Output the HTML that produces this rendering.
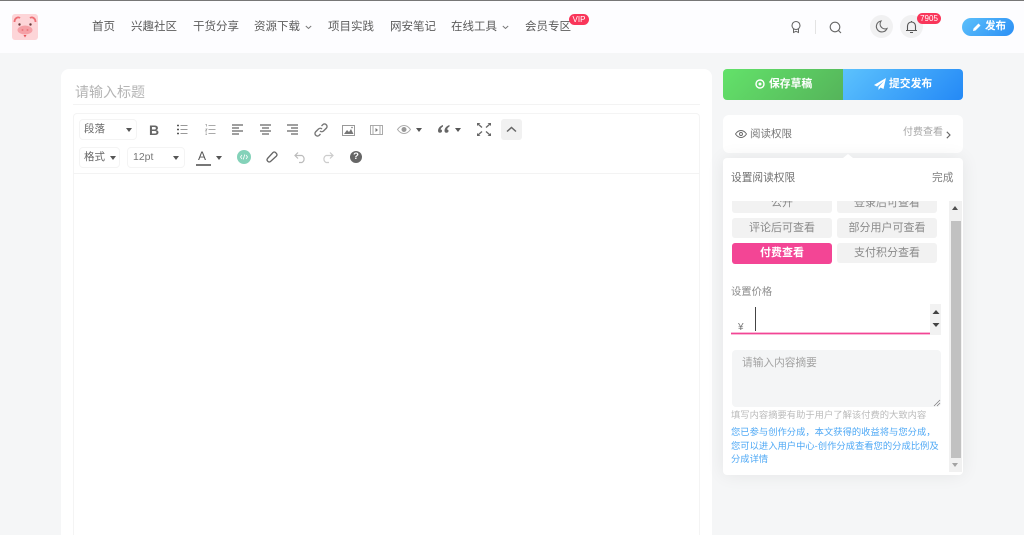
<!DOCTYPE html>
<html lang="zh-CN">
<head>
<meta charset="utf-8">
<title>发布</title>
<style>
*{box-sizing:border-box}
html,body{margin:0;padding:0;width:1024px;height:535px;overflow:hidden}
body{background:#f5f6f7;font-family:"Liberation Sans","Noto Sans CJK SC",sans-serif;color:#555}
#w{position:relative;width:1024px;height:535px;overflow:hidden;background:#f5f6f7}
.a{position:absolute;white-space:nowrap}
svg{position:absolute;overflow:visible;fill:none}
.nav{top:19px;font-size:11.5px;line-height:16px;color:#5c5c5c}
.sel{border:1px solid #f4f4f4;border-radius:4px;height:21px;background:#fff}
.opt{position:absolute;height:20px;width:100px;background:#f2f2f2;border-radius:3px;font-size:11px;line-height:20px;text-align:center;color:#8a8a8a}
.tri{position:absolute;width:0;height:0;border-left:3.5px solid transparent;border-right:3.5px solid transparent;border-top:4px solid #555}
.blue{left:731px;font-size:9.3px;line-height:13px;color:#4ea8f5}
</style>
</head>
<body>
<div id="w">
<!-- Header -->
<div class="a" style="left:0;top:0;width:1024px;height:53px;background:#fdfdff;border-top:1px solid #777"></div>
<svg style="left:11px;top:13px" width="28" height="28" viewBox="0 0 28 28">
<rect x="1" y="1" width="26" height="26" rx="3" fill="#fdd5d8"/>
<path d="M3.500 9C3.500 5 7 3.500 9 5M24.500 9C24.500 5 21 3.500 19 5" stroke="#ee6f75" stroke-width="1.800"/>
<circle cx="8.500" cy="11.500" r="1.200" fill="#6b3a3a"/><circle cx="19.500" cy="11.500" r="1.200" fill="#6b3a3a"/>
<ellipse cx="14" cy="17" rx="7.500" ry="4.500" fill="#f5a0a6"/>
<circle cx="11.500" cy="17" r="1" fill="#e9787e"/><circle cx="16.500" cy="17" r="1" fill="#e9787e"/>
<path d="M12.500 22h3l-1.500 2.500z" fill="#e8525a"/>
</svg>
<div class="a nav" style="left:92px">首页</div>
<div class="a nav" style="left:131px">兴趣社区</div>
<div class="a nav" style="left:193px">干货分享</div>
<div class="a nav" style="left:254px">资源下载</div>
<svg style="left:305px;top:25px" width="7" height="5"><path d="M.8 1l2.700 2.500L6.200 1" stroke="#777"/></svg>
<div class="a nav" style="left:328px">项目实践</div>
<div class="a nav" style="left:390px">网安笔记</div>
<div class="a nav" style="left:451px">在线工具</div>
<svg style="left:502px;top:25px" width="7" height="5"><path d="M.8 1l2.700 2.500L6.200 1" stroke="#777"/></svg>
<div class="a nav" style="left:525px">会员专区</div>
<div class="a" style="left:569px;top:14px;width:20px;height:11px;border-radius:6px;background:#f9365a;color:#fff;font-size:8px;line-height:11px;text-align:center">VIP</div>
<svg style="left:790px;top:20px" width="12" height="14" viewBox="0 0 12 14"><circle cx="6" cy="5.500" r="4" stroke="#666" stroke-width="1.100"/><path d="M3.500 9v3.500l2.500-1.200 2.500 1.200V9" stroke="#666"/></svg>
<div class="a" style="left:815px;top:20px;width:1px;height:14px;background:#e3e3e3"></div>
<svg style="left:829px;top:21px" width="13" height="13" viewBox="0 0 13 13"><circle cx="6" cy="6" r="4.800" stroke="#666" stroke-width="1.100"/><path d="M9.500 9.500L12 12" stroke="#666" stroke-width="1.100"/></svg>
<div class="a" style="left:870px;top:15px;width:23px;height:23px;border-radius:50%;background:#f1f1f2"></div>
<svg style="left:875px;top:20px" width="13" height="13" viewBox="0 0 13 13"><path d="M6 1a5.500 5.500 0 1 0 6 7.500A5 5 0 0 1 6 1z" stroke="#666" stroke-width="1.100"/></svg>
<div class="a" style="left:900px;top:15px;width:23px;height:23px;border-radius:50%;background:#f1f1f2"></div>
<svg style="left:905px;top:20px" width="13" height="14" viewBox="0 0 13 14"><path d="M1 10.500h11M2.500 10.500V6a4 4 0 0 1 8 0v4.500M5 12.500h3M6.500 1v1" stroke="#555" stroke-width="1.100"/></svg>
<div class="a" style="left:917px;top:13px;width:24px;height:11px;border-radius:6px;background:#f9365a;color:#fff;font-size:8px;line-height:11px;text-align:center">7905</div>
<div class="a" style="left:962px;top:18px;width:52px;height:18px;border-radius:9px;background:linear-gradient(135deg,#5cc0fb,#2b8ff5)"></div>
<svg style="left:972px;top:22px" width="10" height="10" viewBox="0 0 10 10"><path d="M1 9l.5-2.500L6.500 1.500l2 2-5 5z" fill="#fff"/></svg>
<div class="a" style="left:985px;top:18px;font-size:10.500px;line-height:16px;color:#fff;font-weight:bold">发布</div>

<!-- Main card -->
<div class="a" style="left:61px;top:69px;width:651px;height:466px;background:#fff;border-radius:8px 8px 0 0"></div>
<div class="a" style="left:75px;top:83px;font-size:14px;line-height:19px;color:#b4b4b4">请输入标题</div>
<div class="a" style="left:73px;top:104px;width:627px;height:1px;background:#f3f3f3"></div>
<div class="a" style="left:73px;top:113px;width:627px;height:422px;border:1px solid #f4f4f4;border-bottom:0;border-radius:4px 4px 0 0"></div>
<div class="a" style="left:73px;top:173px;width:627px;height:1px;background:#f3f3f3"></div>

<!-- Toolbar row 1 -->
<div class="a sel" style="left:79px;top:119px;width:58px"></div>
<div class="a" style="left:84px;top:122px;font-size:10.500px;line-height:14px;color:#666">段落</div>
<div class="tri" style="left:126px;top:128px"></div>
<div class="a" style="left:149px;top:122px;font-size:14px;line-height:16px;font-weight:bold;color:#666">B</div>
<svg style="left:177px;top:124px" width="11" height="11" viewBox="0 0 11 11"><path d="M3.500 1.500h7M3.500 5.500h7M3.500 9.500h7" stroke="#999"/><path d="M0 1.500h2M0 5.500h2M0 9.500h2" stroke="#555" stroke-width="1.500"/></svg>
<svg style="left:205px;top:124px" width="11" height="11" viewBox="0 0 11 11"><path d="M3.500 1.500h7M3.500 5.500h7M3.500 9.500h7" stroke="#aaa"/><path d="M.5 0.500h1v2M.5 5h1.500L.5 7h1.500M.5 9h1.500M.5 10.500h1.500" stroke="#999" stroke-width=".7"/></svg>
<svg style="left:232px;top:124px" width="11" height="11" viewBox="0 0 11 11"><path d="M0 1h11M0 4h7M0 7h11M0 10h7" stroke="#666" stroke-width="1.300"/></svg>
<svg style="left:260px;top:124px" width="11" height="11" viewBox="0 0 11 11"><path d="M0 1h11M2 4h7M0 7h11M2 10h7" stroke="#666" stroke-width="1.300"/></svg>
<svg style="left:287px;top:124px" width="11" height="11" viewBox="0 0 11 11"><path d="M0 1h11M4 4h7M0 7h11M4 10h7" stroke="#666" stroke-width="1.300"/></svg>
<svg style="left:314px;top:123px" width="14" height="14" viewBox="0 0 14 14"><path d="M6 8a2.500 2.500 0 0 0 3.500 0l3-3A2.500 2.500 0 0 0 9 1.500L7.500 3M8 6a2.500 2.500 0 0 0-3.500 0l-3 3A2.500 2.500 0 0 0 5 12.500L6.500 11" stroke="#777" stroke-width="1.400"/></svg>
<svg style="left:342px;top:125px" width="13" height="11" viewBox="0 0 13 11"><rect x=".5" y=".5" width="12" height="10" stroke="#999"/><path d="M2 9l3-4 2 2 2-3 2.500 5z" fill="#777"/><circle cx="10" cy="2.500" r=".8" fill="#777"/></svg>
<svg style="left:370px;top:125px" width="13" height="10" viewBox="0 0 13 10"><rect x=".5" y=".5" width="12" height="9" stroke="#aaa"/><path d="M3 .5v9M10 .5v9" stroke="#aaa"/><path d="M5.500 3l2.500 2-2.500 2z" fill="#777"/></svg>
<svg style="left:397px;top:125px" width="14" height="9" viewBox="0 0 14 9"><path d="M.5 4.500C3 1 5 .5 7 .5s4 .5 6.500 4C11 8 9 8.500 7 8.500S3 8 .5 4.500z" stroke="#aaa"/><circle cx="7" cy="4.500" r="2.500" fill="#999"/></svg>
<div class="tri" style="left:416px;top:128px"></div>
<svg style="left:438px;top:125px" width="12" height="9" viewBox="0 0 12 9"><path d="M5 0C2 1 0 3 0 6a2 2 0 1 0 4-.5C3.500 4.500 3 4.500 2.500 4.500 3 3 4 2 5 1.500zM11.500 0C8.500 1 6.500 3 6.500 6a2 2 0 1 0 4-.5C10 4.500 9.500 4.500 9 4.500 9.500 3 10.500 2 11.500 1.500z" fill="#666"/></svg>
<div class="tri" style="left:455px;top:128px"></div>
<svg style="left:477px;top:123px" width="14" height="13" viewBox="0 0 14 13"><path d="M1 1l4 3.500M13 1L9 4.500M1 12l4-3.500M13 12L9 8.500" stroke="#666" stroke-width="1.300"/><path d="M0 0h3.500L0 3zM14 0h-3.500L14 3zM0 13h3.500L0 10zM14 13h-3.500L14 10z" fill="#666"/></svg>
<div class="a" style="left:501px;top:119px;width:21px;height:21px;background:#f1f1f1;border-radius:3px"></div>
<svg style="left:506px;top:126px" width="11" height="7" viewBox="0 0 11 7"><path d="M1 5.500l4.500-4 4.500 4" stroke="#666" stroke-width="1.500"/></svg>

<!-- Toolbar row 2 -->
<div class="a sel" style="left:79px;top:147px;width:41px"></div>
<div class="a" style="left:84px;top:150px;font-size:10.500px;line-height:14px;color:#666">格式</div>
<div class="tri" style="left:110px;top:156px"></div>
<div class="a sel" style="left:127px;top:147px;width:58px"></div>
<div class="a" style="left:133px;top:150px;font-size:10.500px;line-height:14px;color:#777">12pt</div>
<div class="tri" style="left:173px;top:156px"></div>
<div class="a" style="left:198px;top:149px;font-size:12px;line-height:15px;color:#555">A</div>
<div class="a" style="left:196px;top:164px;width:15px;height:2px;background:#777"></div>
<div class="tri" style="left:216px;top:156px"></div>
<div class="a" style="left:237px;top:150px;width:14px;height:14px;border-radius:50%;background:#84d2b9"></div>
<svg style="left:240px;top:153px" width="8" height="8" viewBox="0 0 8 8"><path d="M2 2L.5 4 2 6M6 2l1.500 2L6 6M4.800 1.500L3.200 6.500" stroke="#fff" stroke-width=".8"/></svg>
<svg style="left:266px;top:151px" width="12" height="12" viewBox="0 0 12 12"><path d="M1.500 7.500l5.500-6a2 2 0 0 1 2.500 0l1 1a2 2 0 0 1 0 2.500l-6 5.500a2 2 0 0 1-2.500 0l-.5-.5a2 2 0 0 1 0-2.500z" stroke="#666" stroke-width="1.300"/></svg>
<svg style="left:294px;top:152px" width="13" height="11" viewBox="0 0 13 11"><path d="M4 .5L1 3.500 4 6.500M1.500 3.500H8a4 4 0 0 1 0 7H5" stroke="#bbb" stroke-width="1.200"/></svg>
<svg style="left:321px;top:152px" width="13" height="11" viewBox="0 0 13 11"><path d="M9 .5l3 3-3 3M11.500 3.500H5a4 4 0 0 0 0 7h3" stroke="#ccc" stroke-width="1.200"/></svg>
<div class="a" style="left:350px;top:151px;width:12px;height:12px;border-radius:50%;background:#666;color:#fff;font-size:9.500px;line-height:12px;font-weight:bold;text-align:center">?</div>

<!-- Right column -->
<div class="a" style="left:723px;top:69px;width:120px;height:31px;background:linear-gradient(135deg,#63e26a,#55b45a);border-radius:4px 0 0 4px"></div>
<div class="a" style="left:843px;top:69px;width:120px;height:31px;background:linear-gradient(135deg,#5cc2fd,#2489f6);border-radius:0 4px 4px 0"></div>
<svg style="left:755px;top:79px" width="10" height="10" viewBox="0 0 10 10"><circle cx="5" cy="5" r="4" stroke="#fff" stroke-width="1.400"/><circle cx="5" cy="5" r="1.500" fill="#fff"/></svg>
<div class="a" style="left:769px;top:76px;font-size:10.800px;line-height:16px;color:#fff;font-weight:bold">保存草稿</div>
<svg style="left:874px;top:78px" width="12" height="12" viewBox="0 0 12 12"><path d="M12 0L0 7l3 1.500L10 3 4.500 9v3l2-2.500 3 1.500z" fill="#fff"/></svg>
<div class="a" style="left:889px;top:76px;font-size:10.800px;line-height:16px;color:#fff;font-weight:bold">提交发布</div>

<div class="a" style="left:723px;top:115px;width:240px;height:38px;background:#fff;border-radius:6px"></div>
<svg style="left:735px;top:130px" width="12" height="8" viewBox="0 0 12 8"><path d="M.5 4C2.500 1 4.500.5 6 .5S9.500 1 11.500 4C9.500 7 7.500 7.500 6 7.500S2.500 7 .5 4z" stroke="#666" stroke-width=".9"/><circle cx="6" cy="4" r="1.500" stroke="#666" stroke-width=".9"/></svg>
<div class="a" style="left:750px;top:126px;font-size:10.500px;line-height:16px;color:#777">阅读权限</div>
<div class="a" style="left:903px;top:125px;font-size:10px;line-height:15px;color:#a5a5a5">付费查看</div>
<svg style="left:946px;top:131px" width="5" height="8" viewBox="0 0 5 8"><path d="M.8.800L4 4 .8 7.200" stroke="#666" stroke-width="1.100"/></svg>

<!-- Popup -->
<div class="a" style="left:723px;top:158px;width:240px;height:317px;background:#fff;border-radius:4px;box-shadow:0 0 18px rgba(0,0,0,.07)"></div>
<div class="a" style="left:843px;top:154px;width:0;height:0;border-left:5px solid transparent;border-right:5px solid transparent;border-bottom:4px solid #fff"></div>
<div class="a" style="left:731px;top:170px;font-size:10.700px;line-height:16px;color:#707070">设置阅读权限</div>
<div class="a" style="left:932px;top:171px;font-size:10.700px;line-height:15px;color:#808080">完成</div>

<div class="a" style="left:723px;top:201px;width:226px;height:70px;overflow:hidden">
  <div class="opt" style="left:9px;top:-8px">公开</div>
  <div class="opt" style="left:114px;top:-8px">登录后可查看</div>
  <div class="opt" style="left:9px;top:17px">评论后可查看</div>
  <div class="opt" style="left:114px;top:17px">部分用户可查看</div>
  <div class="opt" style="left:9px;top:42px;height:21px;line-height:21px;background:#f34595;color:#fff;font-weight:bold">付费查看</div>
  <div class="opt" style="left:114px;top:42px">支付积分查看</div>
</div>

<div class="a" style="left:731px;top:285px;font-size:10.300px;line-height:15px;color:#8c8c8c">设置价格</div>
<div class="a" style="left:738px;top:321px;font-size:10px;line-height:14px;color:#777">¥</div>
<div class="a" style="left:755px;top:307px;width:1px;height:24px;background:#444"></div>
<div class="a" style="left:731px;top:332px;width:199px;height:3px;background:#f9b8d6"></div>
<div class="a" style="left:731px;top:333px;width:199px;height:1px;background:#f34595"></div>
<div class="a" style="left:930px;top:304px;width:11px;height:31px;background:#f2f2f2"></div>
<svg style="left:932px;top:310px" width="8" height="20" viewBox="0 0 8 20"><path d="M.5 4L4 0l3.500 4zM.5 13h7L4 17z" fill="#444"/></svg>

<div class="a" style="left:732px;top:350px;width:209px;height:57px;background:#f4f5f6;border-radius:4px"></div>
<div class="a" style="left:742px;top:356px;font-size:10.700px;line-height:15px;color:#a3a3a3">请输入内容摘要</div>
<svg style="left:934px;top:400px" width="6" height="6" viewBox="0 0 6 6"><path d="M0 6l6-6M3 6l3-3" stroke="#777" stroke-width=".7"/></svg>
<div class="a" style="left:731px;top:409px;font-size:9.300px;line-height:13px;color:#bbb">填写内容摘要有助于用户了解该付费的大致内容</div>
<div class="a blue" style="top:426px">您已参与创作分成，本文获得的收益将与您分成，</div>
<div class="a blue" style="top:440px">您可以进入用户中心-创作分成查看您的分成比例及</div>
<div class="a blue" style="top:453px">分成详情</div>

<!-- Scrollbar -->
<div class="a" style="left:949px;top:201px;width:13px;height:271px;background:#f1f1f1"></div>
<div class="a" style="left:951px;top:221px;width:10px;height:237px;background:#c1c1c1"></div>
<div class="a" style="left:952px;top:206px;width:0;height:0;border-left:3px solid transparent;border-right:3px solid transparent;border-bottom:4px solid #505050"></div>
<div class="a" style="left:952px;top:463px;width:0;height:0;border-left:3px solid transparent;border-right:3px solid transparent;border-top:4px solid #a3a3a3"></div>
</div>
</body>
</html>
